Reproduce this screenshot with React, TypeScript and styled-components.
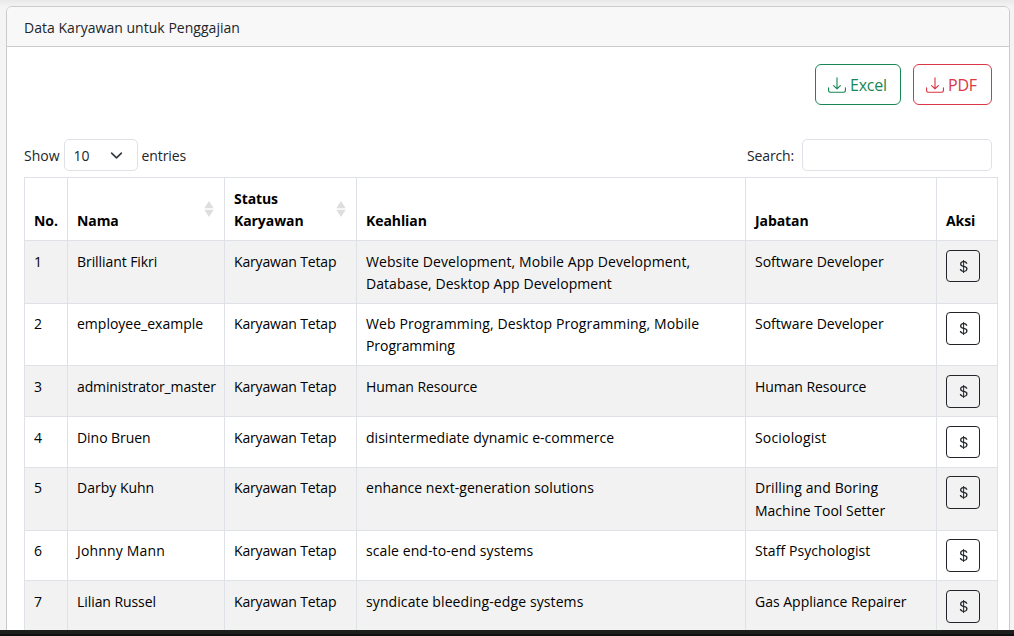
import React from "react";
import styled, { createGlobalStyle, css } from "styled-components";
import { BsCurrencyDollar, BsDownload } from "react-icons/bs";

const GlobalStyle = createGlobalStyle`
  *, *::before, *::after { box-sizing: border-box; }
  body {
    margin: 0;
    background: #f4f4f4;
    color: #212529;
    font: 14px/22px "Open Sans", "Noto Sans", sans-serif;
    overflow: hidden;
  }
`;

const Page = styled.div`
  height: 636px;
  display: flex;
  flex-direction: column;
  overflow: hidden;
  background: linear-gradient(#e9e9e9, #f4f4f4 7px);
`;

const Viewport = styled.main`
  flex: 1;
  min-height: 0;
  overflow: hidden;
  padding: 6px 4px 0 6px;
`;

const BottomBar = styled.footer`
  height: 6px;
  flex: none;
  background: #0f0e10;
  border-top: 4px solid #1c1d1d;
`;

const Card = styled.section`
  height: 700px;
  background: #fff;
  border: 1px solid #cbcbcb;
  border-radius: 6px;
  overflow: hidden;
`;

const CardHeader = styled.header`
  height: 40px;
  padding: 10px 17px 0;
  background: #f8f8f8;
  border-bottom: 1px solid #cbcbcb;
`;

const CardBody = styled.div`
  padding: 17px 0 0 17px;
`;

const Actions = styled.div`
  display: flex;
  justify-content: flex-end;
  gap: 12px;
  padding-right: 17px;
`;

const ExportButton = styled.button<{ $color: string; $width: number }>`
  display: flex;
  align-items: center;
  gap: 4px;
  width: ${(p) => p.$width}px;
  height: 41px;
  padding: 0 0 0 12px;
  border: 1px solid ${(p) => p.$color};
  border-radius: 6px;
  background: transparent;
  color: ${(p) => p.$color};
  font: 16px/24px "Open Sans", "Noto Sans", sans-serif;
  letter-spacing: -0.2px;
`;

const Controls = styled.div`
  display: flex;
  justify-content: space-between;
  margin-top: 34px;
  padding-right: 17px;
`;

const Label = styled.label`
  display: flex;
  align-items: center;
  height: 32px;
  line-height: 24px;
`;

const SelectBox = styled.span`
  display: flex;
  align-items: center;
  justify-content: space-between;
  width: 74px;
  height: 32px;
  margin: 0 4px;
  padding: 0 14px 0 9px;
  border: 1px solid #dee2e6;
  border-radius: 5px;
`;

const SearchInput = styled.input`
  width: 190px;
  height: 32px;
  margin-left: 8px;
  border: 1px solid #dee2e6;
  border-radius: 5px;
  background: #fff;
`;

const Table = styled.table`
  width: 974px;
  margin-top: 6px;
  table-layout: fixed;
  border-collapse: separate;
  border-spacing: 0;
  border: solid #dee2e6;
  border-width: 1px 0 0 1px;
  color: #000;
`;

const Col = styled.col<{ $width: number }>`
  width: ${(p) => p.$width}px;
`;

const cell = css`
  border: solid #dee2e6;
  border-width: 0 1px 1px 0;
  text-align: left;
  white-space: nowrap;
`;

const HeadCell = styled.th`
  ${cell}
  height: 63px;
  padding: 9px 9px 8px;
  vertical-align: bottom;
  font-weight: 700;
  line-height: 22px;
  letter-spacing: -0.08px;
`;

const HeadContent = styled.div`
  display: flex;
  align-items: flex-end;
  justify-content: space-between;
`;

const SortIcon = styled.svg`
  width: 10px;
  height: 16px;
  margin: 0 1px 15px 0;
  fill: #dedede;
`;

const Row = styled.tr<{ $height: number; $striped: boolean; $top: number; $line: number }>`
  height: ${(p) => p.$height}px;
  background: ${(p) => (p.$striped ? "#f2f2f2" : "#fff")};
  line-height: ${(p) => p.$line}px;

  > td {
    padding-top: ${(p) => p.$top}px;
  }
`;

const Cell = styled.td`
  ${cell}
  padding: 0 9px;
  vertical-align: top;
`;

const Text = styled.span<{ $spacing?: number; $drop?: number }>`
  display: block;
  padding-top: ${(p) => p.$drop ?? 0}px;
  letter-spacing: ${(p) => p.$spacing ?? 0}px;
`;

const PayButton = styled.button<{ $height: number; $offset: number }>`
  display: flex;
  align-items: center;
  justify-content: center;
  width: 34px;
  height: ${(p) => p.$height}px;
  margin-top: ${(p) => p.$offset}px;
  padding: 0;
  border: 1px solid #212529;
  border-radius: 4px;
  background: transparent;
  color: #212529;
`;

type Line = [text: string, spacing: number];

interface Employee {
  height: number;
  top: number;
  line?: number;
  button: number;
  offset?: number;
  name: Line;
  skills: Line[];
  position: Line[];
}

const employees: Employee[] = [
  { height: 63, top: 10, button: 32, name: ["Brilliant Fikri", -0.07], skills: [["Website Development, Mobile App Development,", 0.09], ["Database, Desktop App Development", 0.06]], position: [["Software Developer", 0]] },
  { height: 62, top: 9, button: 33, name: ["employee_example", 0], skills: [["Web Programming, Desktop Programming, Mobile", 0.11], ["Programming", -0.05]], position: [["Software Developer", 0]] },
  { height: 51, top: 10, button: 33, name: ["administrator_master", -0.13], skills: [["Human Resource", -0.07]], position: [["Human Resource", -0.07]] },
  { height: 51, top: 10, button: 32, name: ["Dino Bruen", -0.05], skills: [["disintermediate dynamic e-commerce", 0.03]], position: [["Sociologist", 0.18]] },
  { height: 63, top: 8, line: 23, button: 33, offset: 0, name: ["Darby Kuhn", 0], skills: [["enhance next-generation solutions", 0.03]], position: [["Drilling and Boring", 0.1], ["Machine Tool Setter", 0]] },
  { height: 50, top: 9, button: 33, name: ["Johnny Mann", 0.18], skills: [["scale end-to-end systems", 0.09]], position: [["Staff Psychologist", 0.07]] },
  { height: 51, top: 10, button: 33, name: ["Lilian Russel", -0.07], skills: [["syndicate bleeding-edge systems", 0.1]], position: [["Gas Appliance Repairer", 0]] },
];

const Sort = () => (
  <SortIcon viewBox="0 0 10 16">
    <path d="M5 0 9.7 7.3H.3ZM.3 8.7h9.4L5 16Z" />
  </SortIcon>
);

const Lines = ({ lines }: { lines: Line[] }) => (
  <>
    {lines.map(([text, spacing]) => (
      <Text key={text} $spacing={spacing}>{text}</Text>
    ))}
  </>
);

export default function App() {
  return (
    <Page>
      <GlobalStyle />
      <Viewport>
        <Card>
          <CardHeader><Text $spacing={0.03}>Data Karyawan untuk Penggajian</Text></CardHeader>
          <CardBody>
            <Actions>
              <ExportButton $color="#198754" $width={86}><BsDownload size={18} />Excel</ExportButton>
              <ExportButton $color="#dc3545" $width={79}><BsDownload size={18} />PDF</ExportButton>
            </Actions>
            <Controls>
              <Label>
                <Text $drop={2}>Show</Text>
                <SelectBox>
                  <Text $drop={2}>10</Text>
                  <svg width="13" height="13" viewBox="0 0 16 16" fill="none" stroke="#343a40" strokeWidth="2" strokeLinecap="round" strokeLinejoin="round">
                    <path d="m2 5 6 6 6-6" />
                  </svg>
                </SelectBox>
                <Text $drop={2} $spacing={-0.1}>entries</Text>
              </Label>
              <Label><Text $drop={2} $spacing={-0.15}>Search:</Text><SearchInput /></Label>
            </Controls>
            <Table>
              <colgroup>
                {[43, 157, 132, 389, 191, 61].map((w) => <Col key={w} $width={w} />)}
              </colgroup>
              <thead>
                <tr>
                  <HeadCell>No.</HeadCell>
                  <HeadCell><HeadContent>Nama<Sort /></HeadContent></HeadCell>
                  <HeadCell><HeadContent><span>Status<br />Karyawan</span><Sort /></HeadContent></HeadCell>
                  <HeadCell>Keahlian</HeadCell>
                  <HeadCell>Jabatan</HeadCell>
                  <HeadCell>Aksi</HeadCell>
                </tr>
              </thead>
              <tbody>
                {employees.map((e, i) => (
                  <Row key={e.name[0]} $height={e.height} $striped={i % 2 === 0} $top={e.top} $line={e.line ?? 22}>
                    <Cell>{i + 1}</Cell>
                    <Cell><Lines lines={[e.name]} /></Cell>
                    <Cell><Lines lines={[["Karyawan Tetap", -0.16]]} /></Cell>
                    <Cell><Lines lines={e.skills} /></Cell>
                    <Cell><Lines lines={e.position} /></Cell>
                    <Cell><PayButton $height={e.button} $offset={e.offset ?? -1} aria-label="Gaji"><BsCurrencyDollar size={15} /></PayButton></Cell>
                  </Row>
                ))}
              </tbody>
            </Table>
          </CardBody>
        </Card>
      </Viewport>
      <BottomBar />
    </Page>
  );
}
